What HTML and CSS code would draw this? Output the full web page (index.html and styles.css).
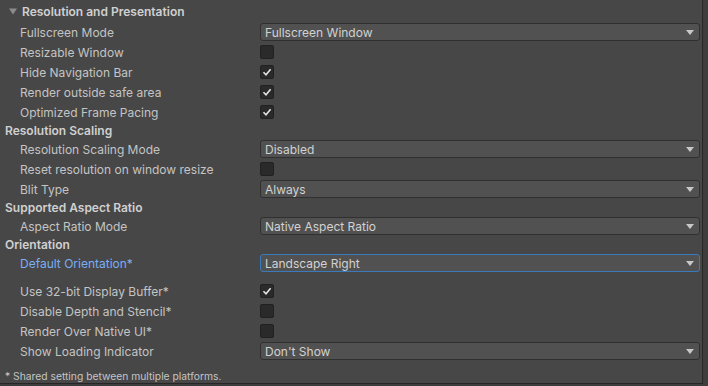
FILE: index.html
```html
<!DOCTYPE html>
<html lang="en">

<head>
    <meta charset="UTF-8">
    <meta name="viewport" content="width=device-width, initial-scale=1.0">
    <title>Player Settings</title>
    <link rel="stylesheet" href="styles.css">
</head>

<body>
    <div class="panel">
        <div class="foldout">
            <svg class="arrow" width="8" height="7" viewBox="0 0 8 7"><path d="M0 0.5 H8 L4 6.5 Z" fill="#8c8c8c"/></svg>
            <span>Resolution and Presentation</span>
        </div>

        <div class="row">
            <span class="label">Fullscreen Mode</span>
            <div class="dropdown"><span>Fullscreen Window</span><i class="caret"></i></div>
        </div>
        <div class="row">
            <span class="label">Resizable Window</span>
            <span class="check"></span>
        </div>
        <div class="row">
            <span class="label">Hide Navigation Bar</span>
            <span class="check on"><svg width="14" height="14" viewBox="0 0 14 14"><path d="M3.5 7.3 L6 9.8 L10.6 4.2" /></svg></span>
        </div>
        <div class="row">
            <span class="label">Render outside safe area</span>
            <span class="check on"><svg width="14" height="14" viewBox="0 0 14 14"><path d="M3.5 7.3 L6 9.8 L10.6 4.2" /></svg></span>
        </div>
        <div class="row">
            <span class="label">Optimized Frame Pacing</span>
            <span class="check on"><svg width="14" height="14" viewBox="0 0 14 14"><path d="M3.5 7.3 L6 9.8 L10.6 4.2" /></svg></span>
        </div>

        <div class="section">Resolution Scaling</div>
        <div class="row">
            <span class="label">Resolution Scaling Mode</span>
            <div class="dropdown"><span>Disabled</span><i class="caret"></i></div>
        </div>
        <div class="row">
            <span class="label">Reset resolution on window resize</span>
            <span class="check"></span>
        </div>
        <div class="row">
            <span class="label">Blit Type</span>
            <div class="dropdown"><span>Always</span><i class="caret"></i></div>
        </div>

        <div class="section">Supported Aspect Ratio</div>
        <div class="row">
            <span class="label">Aspect Ratio Mode</span>
            <div class="dropdown"><span>Native Aspect Ratio</span><i class="caret"></i></div>
        </div>

        <div class="section">Orientation</div>
        <div class="row">
            <span class="label blue">Default Orientation*</span>
            <div class="dropdown focus"><span>Landscape Right</span><i class="caret"></i></div>
        </div>

        <div class="row spaced">
            <span class="label">Use 32-bit Display Buffer*</span>
            <span class="check on"><svg width="14" height="14" viewBox="0 0 14 14"><path d="M3.5 7.3 L6 9.8 L10.6 4.2" /></svg></span>
        </div>
        <div class="row">
            <span class="label">Disable Depth and Stencil*</span>
            <span class="check"></span>
        </div>
        <div class="row">
            <span class="label">Render Over Native UI*</span>
            <span class="check"></span>
        </div>
        <div class="row">
            <span class="label">Show Loading Indicator</span>
            <div class="dropdown"><span>Don't Show</span><i class="caret"></i></div>
        </div>

        <div class="note">* Shared setting between multiple platforms.</div>
    </div>
</body>

</html>
```

FILE: styles.css
```css
body {
    margin: 0;
    background: #3d3d3d;
    font-family: Inter, "Noto Sans", sans-serif;
    font-size: 12px;
    color: #c4c4c4;
}

.panel {
    width: 703px;
    height: 384px;
    background: #474747;
    border-right: 1px solid #272727;
    border-bottom: 1px solid #262626;
    box-sizing: border-box;
    overflow: hidden;
}

.foldout {
    display: flex;
    align-items: center;
    height: 22px;
    padding-left: 9px;
    font-weight: 600;
    color: #d0d0d0;
}

.foldout .arrow {
    margin-right: 5px;
}

.section {
    display: flex;
    align-items: center;
    height: 17px;
    padding-left: 5px;
    font-weight: 600;
    color: #d0d0d0;
}

.row {
    display: flex;
    align-items: center;
    height: 20px;
    padding-left: 20px;
    padding-right: 2px;
}

.row.spaced {
    margin-top: 8px;
}

.label {
    width: 240px;
    flex: none;
    white-space: nowrap;
}

.label.blue {
    color: #7aaef5;
}

.dropdown {
    flex: 1;
    height: 18px;
    display: flex;
    align-items: center;
    justify-content: space-between;
    padding: 0 4px 0 4px;
    background: #515151;
    border: 1px solid #303030;
    border-radius: 3px;
    box-sizing: border-box;
    color: #d2d2d2;
}

.dropdown.focus {
    border-color: #3a79bb;
}

.caret {
    width: 0;
    height: 0;
    border-left: 4px solid transparent;
    border-right: 4px solid transparent;
    border-top: 5px solid #c8c8c8;
    margin-right: 1px;
}

.check {
    width: 14px;
    height: 14px;
    box-sizing: border-box;
    background: #2a2a2a;
    border: 1px solid #212121;
    border-radius: 2px;
    position: relative;
}

.check svg {
    position: absolute;
    left: -1px;
    top: -1px;
}

.check path {
    fill: none;
    stroke: #e4e4e4;
    stroke-width: 1.6;
}

.note {
    height: 23px;
    padding: 9px 0 0 5px;
    box-sizing: border-box;
    font-size: 10.3px;
    line-height: 12px;
    color: #c4c4c4;
}
```
